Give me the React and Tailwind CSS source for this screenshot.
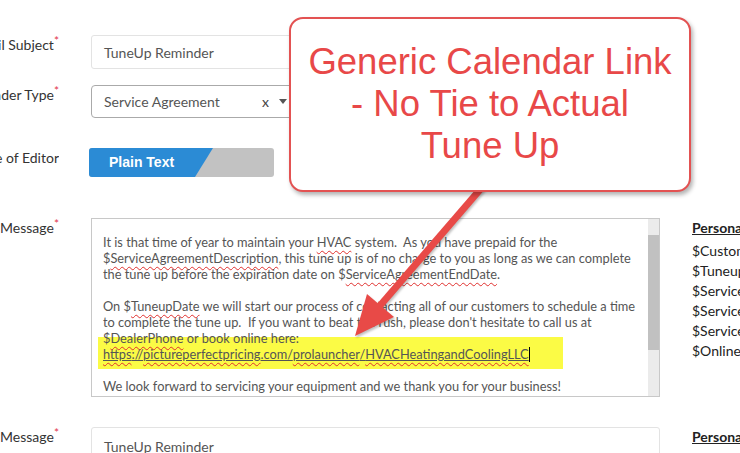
import React from "react";

const Label = ({ text }) => (
  <div className="w-[59px] shrink-0 flex justify-end overflow-hidden">
    <span className="shrink-0 whitespace-nowrap text-[14px] leading-5 text-[#333]">
      {text}
      {text !== "Type of Editor" && <span className="text-[12px] leading-none align-top text-[#e2364c]">*</span>}
    </span>
  </div>
);

const Spell = ({ children }) => (
  <span className="underline decoration-wavy decoration-[#e0302e] decoration-1 underline-offset-[3px]">{children}</span>
);

export default function App() {
  const vars = [
    "$CustomerName",
    "$TuneupDate",
    "$ServiceAgreementDescription",
    "$ServiceAgreementEndDate",
    "$ServiceAgreementStartDate",
    "$OnlineBookingLink",
  ];

  return (
    <div className="relative w-[740px] h-[453px] overflow-hidden bg-white font-['Lato',sans-serif]">
      <div className="flex flex-col pt-[35px]">
        {/* email subject */}
        <div className="flex items-start gap-[32px]">
          <Label text="Email Subject" />
          <div className="w-[569px] h-[34px] shrink-0 rounded-[3px] border border-[#e3e3e3] flex items-center px-[12px] text-[14px] text-[#555]">
            TuneUp Reminder
          </div>
        </div>

        {/* reminder type */}
        <div className="flex items-start gap-[32px] mt-[16px]">
          <Label text="Reminder Type" />
          <div className="w-[207px] h-[33px] shrink-0 rounded-[4px] border border-[#aaa] flex items-center pl-[12px] pr-[10px] text-[14px] text-[#555]">
            <span className="flex-1">Service Agreement</span>
            <span className="text-[14px] text-[#444] mr-[10px]">x</span>
            <span className="w-0 h-0 border-l-[4px] border-r-[4px] border-t-[5px] border-l-transparent border-r-transparent border-t-[#555]" />
          </div>
        </div>

        {/* editor type */}
        <div className="flex items-start gap-[32px] mt-[30px]">
          <Label text="Type of Editor" />
          <div className="ml-[-2px] w-[185px] h-[29px] shrink-0 rounded-[3px] bg-[#c2c2c2] overflow-hidden flex">
            <div className="w-[124px] h-full bg-[#2b8bd5] [clip-path:polygon(0_0,100%_0,calc(100%-18px)_100%,0_100%)] flex items-center pl-[20px] font-['Liberation_Sans',sans-serif] font-bold text-[14px] text-white">
              Plain Text
            </div>
          </div>
        </div>

        {/* message */}
        <div className="flex items-start gap-[32px] mt-[41px]">
          <Label text="Text Message" />
          <div className="relative w-[569px] h-[179px] shrink-0 border border-[#c8c8c8] overflow-hidden flex">
            <div className="absolute left-[6px] top-[118px] w-[465px] h-[32px] bg-[#fbfb45]" />
            <div className="relative flex-1 pl-[11px] pt-[15px] text-[12.8px] leading-4 text-[#555] whitespace-pre">
              <div>It is that time of year to maintain your <Spell>HVAC</Spell> system.  As you have prepaid for the</div>
              <div>$<Spell>ServiceAgreementDescription</Spell>, this tune up is of no charge to you as long as we can complete</div>
              <div>the tune up before the expiration date on $<Spell>ServiceAgreementEndDate</Spell>.</div>
              <div>&nbsp;</div>
              <div>On $<Spell>TuneupDate</Spell> we will start our process of contacting all of our customers to schedule a time</div>
              <div>to complete the tune up.  If you want to beat the rush, please don't hesitate to call us at</div>
              <div>$<Spell>DealerPhone</Spell> or book online here:</div>
              <div className="flex items-center">
                <span className="underline">
                  <Spell>https</Spell>://<Spell>pictureperfectpricing</Spell>.com/<Spell>prolauncher</Spell>/<Spell>HVACHeatingandCoolingLLC</Spell>
                </span>
                <span className="w-px h-[15px] bg-black" />
              </div>
              <div>&nbsp;</div>
              <div>We look forward to servicing your equipment and we thank you for your business!</div>
            </div>
            <div className="w-[11px] h-full bg-[#ebebeb] flex flex-col">
              <div className="h-[16px]" />
              <div className="h-[115px] bg-[#c1c1c1]" />
            </div>
          </div>
          <div className="text-[14px] text-[#222] whitespace-nowrap">
            <div className="leading-5 font-bold underline">Personalization</div>
            <div className="mt-[3px] flex flex-col">
              {vars.map((v) => (
                <div key={v} className="leading-5">{v}</div>
              ))}
            </div>
          </div>
        </div>

        {/* email message */}
        <div className="flex items-start gap-[32px] mt-[30px]">
          <Label text="Email Message" />
          <div className="w-[569px] h-[40px] shrink-0 border border-[#e3e3e3] rounded-t-[3px] pl-[12px] pt-[8px] text-[14px] text-[#555]">
            TuneUp Reminder
          </div>
          <div className="text-[14px] text-[#222] leading-5 font-bold underline whitespace-nowrap">Personalization</div>
        </div>
      </div>

      {/* annotation arrow */}
      <svg className="absolute left-0 top-0 pointer-events-none" width="740" height="453" viewBox="0 0 740 453">
        <g style={{ filter: "drop-shadow(1px 2px 1px rgba(0,0,0,0.25))" }}>
          <line x1="484" y1="185" x2="378" y2="308" stroke="#e84a47" strokeWidth="7" />
          <polygon points="355,336 394,317 367,294" fill="#e84a47" />
        </g>
      </svg>

      {/* callout */}
      <div className="absolute left-[289px] top-[17px] w-[402px] h-[175px] rounded-[14px] border-2 border-[#e35252] bg-white shadow-[2px_3px_4px_rgba(0,0,0,0.3)] flex flex-col items-center pt-[22px] font-['Liberation_Sans',sans-serif] text-[36.5px] leading-[42px] text-[#e84848] text-center">
        <div>Generic Calendar Link</div>
        <div>- No Tie to Actual</div>
        <div>Tune Up</div>
      </div>
    </div>
  );
}
